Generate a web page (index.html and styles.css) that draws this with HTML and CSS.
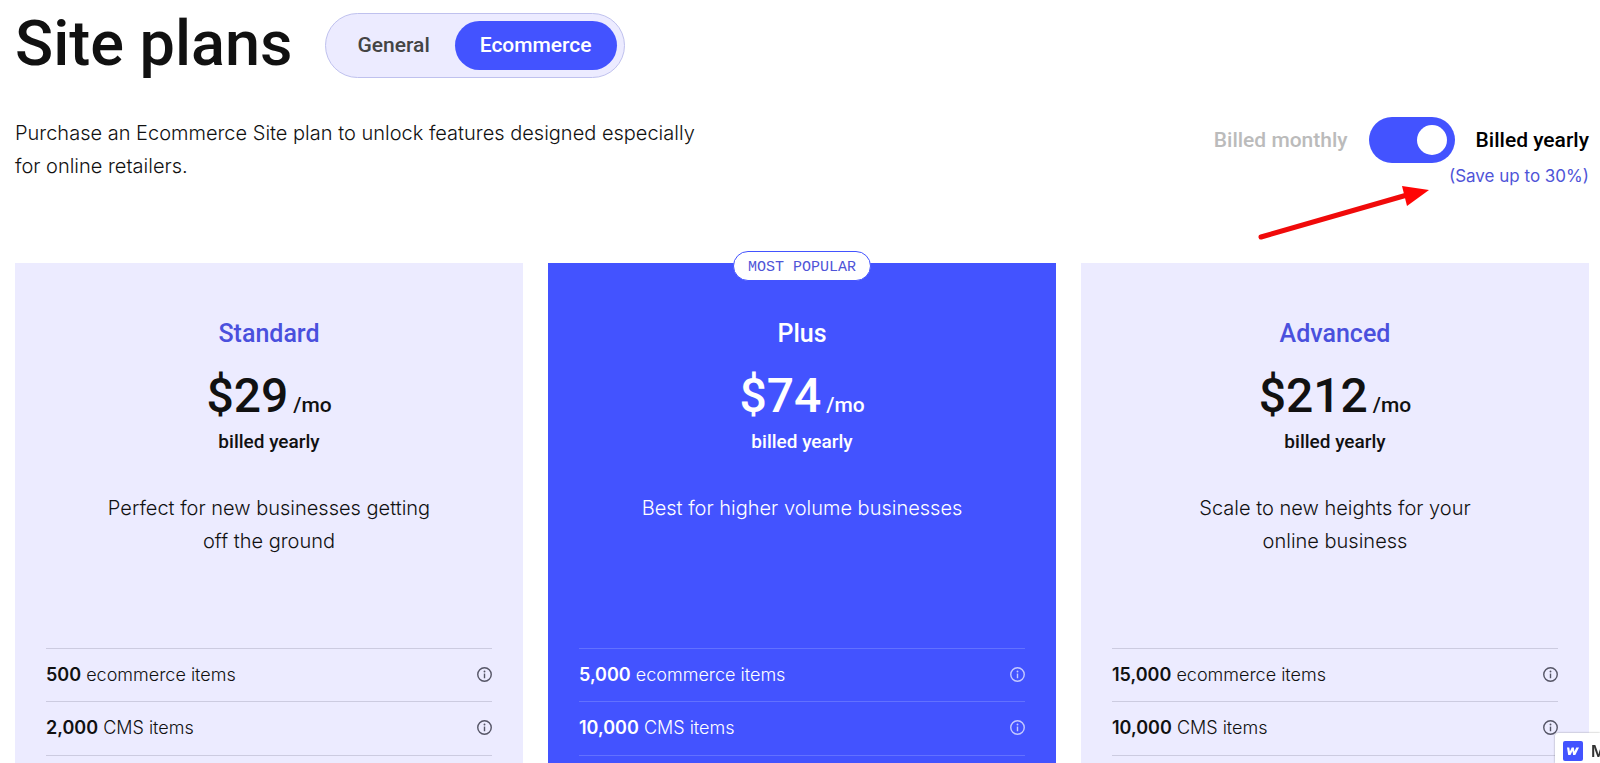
FILE: index.html
```
<!DOCTYPE html>
<html lang="en">
<head>
	<meta charset="utf-8">
	<meta name="viewport" content="width=device-width, initial-scale=1">
	<title>Site plans</title>
	<link rel="stylesheet" href="styles.css">
</head>
<body>
<!-- shared info icon -->
<svg class="sprite" aria-hidden="true">
	<symbol id="info" viewBox="0 0 16 16">
		<circle cx="8" cy="8" r="7.2" fill="none" stroke="currentColor" stroke-width="1.5"/>
		<path d="M8 7v5" stroke="currentColor" stroke-width="1.5"/>
		<circle cx="8" cy="4.8" r="1" fill="currentColor"/>
	</symbol>
</svg>

<div class="page">

<header class="top">
	<h1>Site plans</h1>
	<div class="tabs">
		<button type="button" class="tab">General</button>
		<button type="button" class="tab active">Ecommerce</button>
	</div>
</header>

<section class="intro">
	<p class="intro-text">Purchase an Ecommerce Site plan to unlock features designed especially for online retailers.</p>
	<div class="billing">
		<div class="billing-row">
			<label for="yearly" class="monthly">Billed monthly</label>
			<input type="checkbox" id="yearly" class="switch" checked>
			<label for="yearly">Billed yearly</label>
		</div>
		<p class="save">(Save up to 30%)</p>
		<svg class="arrow" viewBox="0 0 174 58" aria-hidden="true">
			<path d="M6 51L152 9" stroke="#f00a0a" stroke-width="5" stroke-linecap="round"/>
			<path d="M147 0L174 4L152 20z" fill="#ff0505"/>
		</svg>
	</div>
</section>

<main class="plans">
	<article class="plan">
		<h2>Standard</h2>
		<p class="price"><span class="amount">$29</span><span class="per">/mo</span></p>
		<p class="billed">billed yearly</p>
		<p class="desc">Perfect for new businesses getting off the ground</p>
		<ul class="features">
			<li><span><b>500</b> ecommerce items</span><button type="button" class="info" aria-label="Info"><svg><use href="#info"/></svg></button></li>
			<li><span><b>2,000</b> CMS items</span><button type="button" class="info" aria-label="Info"><svg><use href="#info"/></svg></button></li>
		</ul>
	</article>

	<article class="plan popular">
		<span class="badge">MOST POPULAR</span>
		<h2>Plus</h2>
		<p class="price"><span class="amount">$74</span><span class="per">/mo</span></p>
		<p class="billed">billed yearly</p>
		<p class="desc">Best for higher volume businesses</p>
		<ul class="features">
			<li><span><b>5,000</b> ecommerce items</span><button type="button" class="info" aria-label="Info"><svg><use href="#info"/></svg></button></li>
			<li><span><b>10,000</b> CMS items</span><button type="button" class="info" aria-label="Info"><svg><use href="#info"/></svg></button></li>
		</ul>
	</article>

	<article class="plan">
		<h2>Advanced</h2>
		<p class="price"><span class="amount">$212</span><span class="per">/mo</span></p>
		<p class="billed">billed yearly</p>
		<p class="desc">Scale to new heights for your online business</p>
		<ul class="features">
			<li><span><b>15,000</b> ecommerce items</span><button type="button" class="info" aria-label="Info"><svg><use href="#info"/></svg></button></li>
			<li><span><b>10,000</b> CMS items</span><button type="button" class="info" aria-label="Info"><svg><use href="#info"/></svg></button></li>
		</ul>
	</article>
</main>

</div>

<a href="#" class="made">
	<svg viewBox="0 0 20 20" aria-hidden="true">
		<rect width="20" height="20" rx="2" fill="#4353ff"/>
		<path d="M4 6.500h2.300l.6 4 1.800-4h2.200l.5 4 1.900-4h2.700l-3.700 7.500h-2.200l-.6-4-2 4H5.200z" fill="#fff"/>
	</svg>
	<span>M</span>
</a>
</body>
</html>
```
FILE: styles.css
```
html, *, *::before,
*::after{
	box-sizing: border-box;
}
body{
	margin: 0;
	height: 100vh;
	overflow: hidden;
	background: #fff;
	color: #111;
	font-family: Inter, "Liberation Sans", sans-serif;
	font-size: 20px;
}
h1, h2, p, ul{
	margin: 0;
	padding: 0;
}
h1, h2, .tab, .billing-row, .price, .billed{
	font-family: Roboto, "Liberation Sans", sans-serif;
	font-weight: 500;
}
button{
	border: 0;
	padding: 0;
	background: none;
	cursor: pointer;
}
.sprite{
	display: none;
}
.page{
	padding: 13px 11px 0 15px;
}

/* title and tabs */
.top{
	display: flex;
	align-items: center;
	gap: 32px;
}
h1{
	padding-bottom: 4px;
	font-size: 63px;
	line-height: 60px;
}
.tabs{
	display: flex;
	padding: 7px;
	border: 1px solid #bfc1ee;
	border-radius: 33px;
	background: #ecebff;
}
.tab{
	height: 49px;
	padding: 0 25px 2px;
	border-radius: 25px;
	color: #444;
	font-size: 21px;
}
.tab.active{
	background: #4353ff;
	color: #fff;
}

/* intro */
.intro{
	display: flex;
	justify-content: space-between;
	align-items: flex-start;
	padding-top: 39px;
	height: 185px;
}
.intro-text{
	max-width: 700px;
	line-height: 33px;
	font-weight: 300;
}
.billing{
	position: relative;
	color: #000;
}
.billing-row{
	display: flex;
	align-items: center;
	gap: 21px;
	font-size: 21px;
}
.monthly{
	color: #bbb;
}
.switch{
	appearance: none;
	display: flex;
	align-items: center;
	justify-content: flex-start;
	width: 86px;
	height: 46px;
	margin: 0;
	padding: 0 8px;
	border-radius: 23px;
	background: #bbb;
	cursor: pointer;
}
.switch::before{
	content: "";
	width: 30px;
	height: 30px;
	border-radius: 50%;
	background: #fff;
}
.switch:checked{
	justify-content: flex-end;
	background: #4353ff;
}
.save{
	text-align: right;
	color: #4f54d8;
	font-size: 17px;
	line-height: 26px;
}
.arrow{
	position: absolute;
	top: 69px;
	right: 160px;
	width: 174px;
	height: 58px;
}

/* plan cards */
.plans{
	display: grid;
	grid-template-columns: repeat(3, 1fr);
	gap: 25px;
}
.plan{
	position: relative;
	min-height: 520px;
	padding: 54px 31px 0;
	background: #ecebff;
	text-align: center;
}
h2{
	color: #4a50dd;
	font-size: 25px;
	line-height: 34px;
}
.price{
	display: flex;
	justify-content: center;
	align-items: baseline;
	gap: 5px;
	padding-top: 20px;
	line-height: 50px;
}
.amount{
	font-size: 48px;
}
.per{
	font-size: 21px;
}
.billed{
	font-size: 19px;
	line-height: 24px;
}
.desc{
	width: 328px;
	height: 156px;
	margin: 38px auto 0;
	line-height: 33px;
	font-weight: 300;
}
.features{
	list-style: none;
	text-align: left;
	font-size: 18px;
	font-weight: 300;
}
.features li{
	display: flex;
	justify-content: space-between;
	align-items: center;
	height: 53px;
	padding-bottom: 2px;
	border-top: 1px solid #cccbe0;
}
.features li:last-child{
	height: 55px;
	border-bottom: 1px solid #cccbe0;
}
.features b{
	font-weight: 600;
}
.info{
	display: flex;
	color: #555566;
}
.info svg{
	width: 15px;
	height: 15px;
}

.popular{
	background: #4353ff;
	color: #fff;
}
.popular h2{
	color: #fff;
}
.popular .features li{
	border-color: #6271ff;
}
.popular .info{
	color: #c5caff;
}
.badge{
	position: absolute;
	top: -12px;
	left: 50%;
	transform: translateX(-50%);
	padding: 3px 14px 0;
	border: 1px solid #4353ff;
	border-radius: 15px;
	background: #fff;
	color: #4f54d8;
	font-family: "Liberation Mono", monospace;
	font-size: 15px;
	line-height: 25px;
	white-space: nowrap;
}

/* corner link */
.made{
	position: fixed;
	right: 0;
	bottom: 0;
	display: flex;
	align-items: center;
	gap: 8px;
	width: 45px;
	height: 30px;
	padding: 6px 0 0 8px;
	overflow: hidden;
	border-radius: 3px 0 0 0;
	background: #fff;
	box-shadow: 0 0 2px rgba(0, 0, 0, 0.4);
	color: #333;
	font-size: 16px;
	font-weight: 600;
	text-decoration: none;
}
.made svg{
	flex: none;
	width: 20px;
	height: 20px;
}
```
